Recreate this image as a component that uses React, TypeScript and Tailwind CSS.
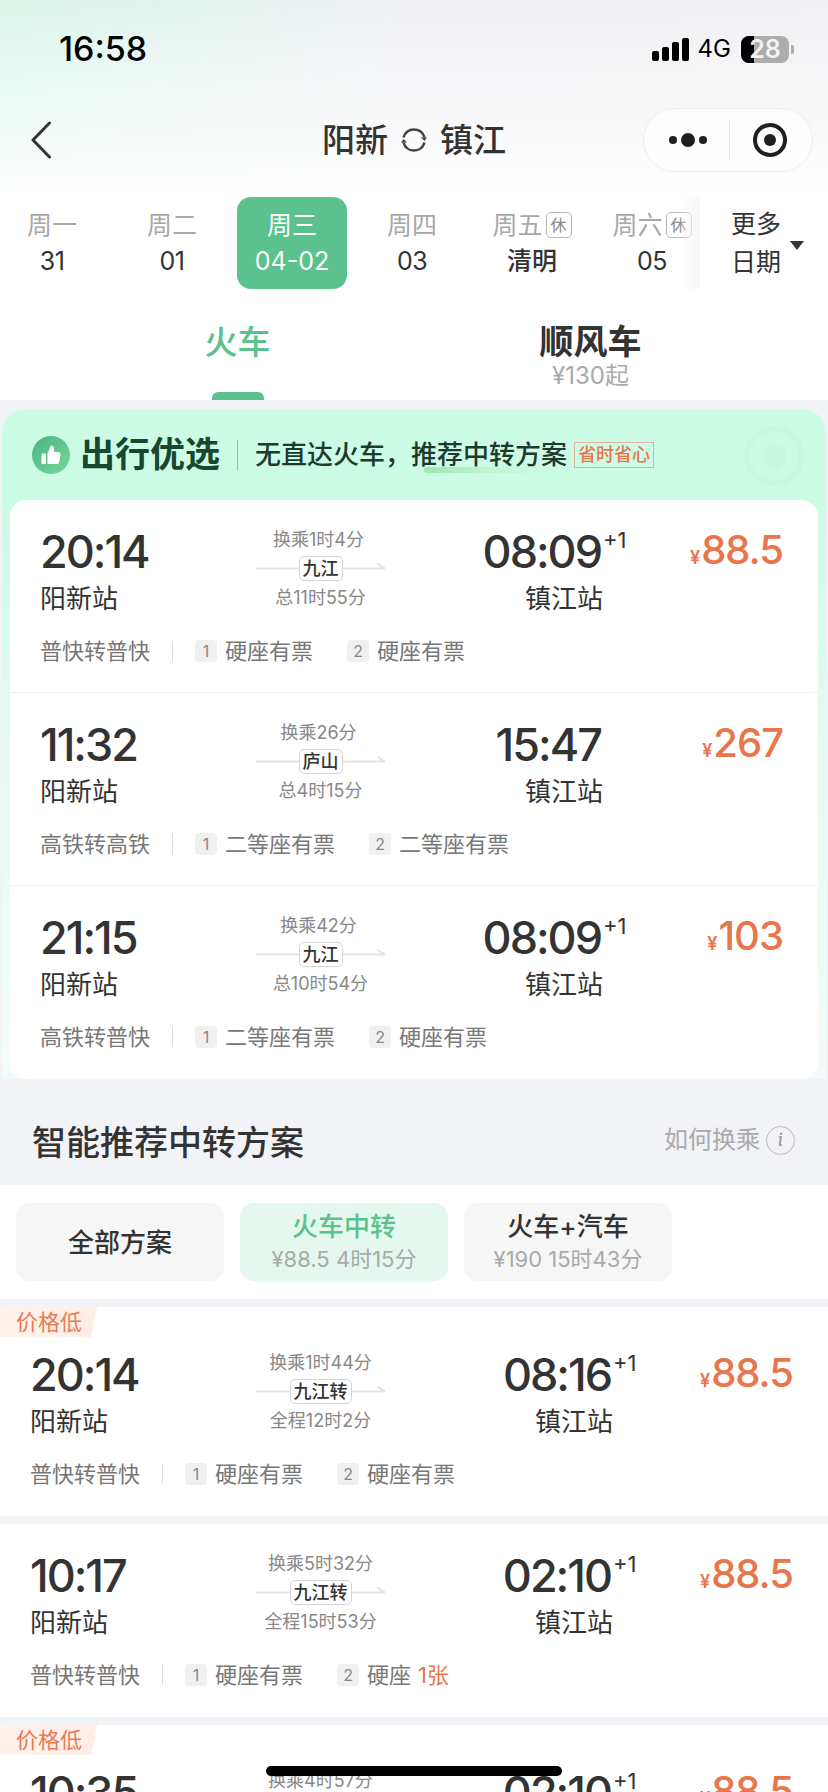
type Seat = { text: string; extra?: string };

interface TripProps {
  dep: string;
  arr: string;
  nextDay?: boolean;
  transfer: string;
  via: string;
  total: string;
  price: string;
  kind: string;
  seats: Seat[];
  inCard?: boolean;
  cheap?: boolean;
}

const days = [
  { label: "周一", value: "31" },
  { label: "周二", value: "01" },
  { label: "周三", value: "04-02", active: true },
  { label: "周四", value: "03" },
  { label: "周五", value: "清明", rest: true, bold: true },
  { label: "周六", value: "05", rest: true },
];

const picks: TripProps[] = [
  {
    dep: "20:14",
    arr: "08:09",
    nextDay: true,
    transfer: "换乘1时4分",
    via: "九江",
    total: "总11时55分",
    price: "88.5",
    kind: "普快转普快",
    seats: [{ text: "硬座有票" }, { text: "硬座有票" }],
  },
  {
    dep: "11:32",
    arr: "15:47",
    transfer: "换乘26分",
    via: "庐山",
    total: "总4时15分",
    price: "267",
    kind: "高铁转高铁",
    seats: [{ text: "二等座有票" }, { text: "二等座有票" }],
  },
  {
    dep: "21:15",
    arr: "08:09",
    nextDay: true,
    transfer: "换乘42分",
    via: "九江",
    total: "总10时54分",
    price: "103",
    kind: "高铁转普快",
    seats: [{ text: "二等座有票" }, { text: "硬座有票" }],
  },
];

const plans: TripProps[] = [
  {
    dep: "20:14",
    arr: "08:16",
    nextDay: true,
    transfer: "换乘1时44分",
    via: "九江转",
    total: "全程12时2分",
    price: "88.5",
    kind: "普快转普快",
    seats: [{ text: "硬座有票" }, { text: "硬座有票" }],
    cheap: true,
  },
  {
    dep: "10:17",
    arr: "02:10",
    nextDay: true,
    transfer: "换乘5时32分",
    via: "九江转",
    total: "全程15时53分",
    price: "88.5",
    kind: "普快转普快",
    seats: [{ text: "硬座有票" }, { text: "硬座", extra: "1张" }],
  },
  {
    dep: "10:35",
    arr: "02:10",
    nextDay: true,
    transfer: "换乘4时57分",
    via: "九江转",
    total: "全程15时53分",
    price: "88.5",
    kind: "普快转普快",
    seats: [{ text: "硬座有票" }, { text: "硬座有票" }],
    cheap: true,
  },
];

function StatusBar() {
  return (
    <div className="flex h-[98px] items-center justify-between pl-[59px] pr-[34px]">
      <span className="text-[34px] font-medium leading-none text-black">16:58</span>
      <div className="flex items-center">
        <div className="flex items-end gap-[3px]">
          <span className="h-[10px] w-[7px] rounded-[2px] bg-black" />
          <span className="h-[14px] w-[7px] rounded-[2px] bg-black" />
          <span className="h-[19px] w-[7px] rounded-[2px] bg-black" />
          <span className="h-[23px] w-[7px] rounded-[2px] bg-black" />
        </div>
        <span className="ml-[9px] text-[24px] leading-none text-black">4G</span>
        <div className="relative ml-[10px] flex h-[27px] w-[48px] items-center justify-center overflow-hidden rounded-[8px] bg-[#adadad]">
          <span className="absolute inset-y-0 left-0 w-[13px] bg-black" />
          <span className="relative text-[25px] font-semibold leading-none text-[#f2f2f2]">28</span>
        </div>
        <span className="ml-[2px] h-[9px] w-[3px] rounded-r-[2px] bg-[#adadad]" />
      </div>
    </div>
  );
}

function NavBar() {
  return (
    <div className="mt-[10px] grid h-[64px] grid-cols-[1fr_auto_1fr] items-center">
      <svg className="ml-[30px] h-[38px] w-[22px]" viewBox="0 0 22 38" fill="none" stroke="#333" strokeWidth="3" strokeLinecap="round" strokeLinejoin="round">
        <path d="M19.5 2 3 19l16.5 17" />
      </svg>
      <div className="flex items-center text-[33px] font-medium leading-none text-[#333]">
        阳新
        <svg className="mx-[12px] h-[28px] w-[28px]" viewBox="0 0 28 28" fill="none" stroke="#444" strokeWidth="2.6">
          <path d="M3.5 11.5C5 6.5 9 3.5 14 3.5c5 0 9 3 10.5 8" />
          <path d="M24.5 16.5C23 21.5 19 24.5 14 24.5c-5 0-9-3-10.5-8" />
          <path d="M21 11.5h6L24.5 15z" fill="#444" stroke="none" />
          <path d="M1 16.5h6L3.5 13z" fill="#444" stroke="none" />
        </svg>
        镇江
      </div>
      <div className="mr-[15px] flex h-[64px] w-[170px] items-center justify-self-end rounded-full border border-[#eeeeee] bg-white/70">
        <div className="flex w-[85px] items-center justify-center gap-[4px] pl-[2px]">
          <span className="h-[8px] w-[8px] rounded-full bg-[#1f1f1f]" />
          <span className="h-[14px] w-[14px] rounded-full bg-[#1f1f1f]" />
          <span className="h-[8px] w-[8px] rounded-full bg-[#1f1f1f]" />
        </div>
        <span className="h-[40px] w-px bg-[#e2e2e2]" />
        <div className="flex flex-1 items-center justify-center pr-[2px]">
          <span className="flex h-[34px] w-[34px] items-center justify-center rounded-full border-[4px] border-[#1f1f1f]">
            <span className="h-[12px] w-[12px] rounded-full bg-[#1f1f1f]" />
          </span>
        </div>
      </div>
    </div>
  );
}

function DateStrip() {
  return (
    <div className="relative mt-[25px] -ml-[8px] flex h-[92px] w-[836px]">
      {days.map((d) => (
        <div
          key={d.label}
          className={
            d.active
              ? "mx-[5px] flex w-[110px] flex-col items-center rounded-[14px] bg-[#5bc28d] text-white"
              : "flex w-[120px] flex-col items-center"
          }
        >
          <div
            className={
              d.active
                ? "mt-[11px] flex h-[34px] items-center text-[25px] leading-none"
                : "mt-[11px] flex h-[34px] items-center text-[25px] leading-none text-[#a8a8a8]"
            }
          >
            {d.label}
            {d.rest && (
              <span className="ml-[3px] flex h-[26px] w-[26px] items-center justify-center rounded-[5px] border border-[#b5b5b5] text-[16px] text-[#888]">
                休
              </span>
            )}
          </div>
          <span
            className={
              d.active
                ? "mt-[1px] text-[25px] leading-[36px]"
                : d.bold
                  ? "mt-[1px] text-[25px] font-medium leading-[36px] text-[#333]"
                  : "mt-[1px] text-[25px] leading-[36px] tracking-[-0.5px] text-[#333]"
            }
          >
            {d.value}
          </span>
        </div>
      ))}
      <div className="relative flex w-[116px] flex-col items-center pr-[28px] pt-[8px] text-[25px] leading-[38px] text-[#333]">
        <span className="absolute -left-[34px] top-0 h-full w-[22px] bg-gradient-to-r from-transparent to-[#f8f8f8]" />
        <span>更多</span>
        <span>日期</span>
        <span className="absolute right-[24px] top-[44px] h-0 w-0 border-x-[7px] border-t-[9px] border-x-transparent border-t-[#333]" />
      </div>
    </div>
  );
}

function Tabs() {
  return (
    <div className="grid h-[111px] grid-cols-2 px-[61px]">
      <div className="flex flex-col items-center pt-[33px]">
        <span className="text-[33px] font-medium leading-[40px] text-[#5bc28d]">火车</span>
        <span className="mt-auto h-[8px] w-[52px] rounded-t-[6px] bg-[#5bc28d]" />
      </div>
      <div className="flex flex-col items-center pt-[33px]">
        <span className="text-[34px] font-bold leading-[40px] text-[#333]">顺风车</span>
        <span className="text-[24px] leading-[28px] text-[#aaaaaa]">¥130起</span>
      </div>
    </div>
  );
}

function Trip(p: TripProps) {
  const c = p.inCard;
  return (
    <div className={c ? "relative h-[193px] border-b border-[#eeeeee] pl-[30px] pr-[35px] pt-[29px] last:border-b-0" : "relative bg-white pl-[30px] pr-[35px] pt-[29px] pb-[27px]"}>
      {p.cheap && (
        <span className="absolute left-0 top-0 flex h-[30px] w-[97px] items-center bg-gradient-to-r from-[#fff1eb] to-[#fdeee8] pl-[16px] text-[22px] leading-none text-[#ea7b52] [clip-path:polygon(0_0,100%_0,94%_100%,0_100%)]">
          价格低
        </span>
      )}
      <div className={p.cheap ? "mt-[16px] flex items-start" : "flex items-start"}>
        <div className={c ? "w-[216px] shrink-0" : "w-[226px] shrink-0"}>
          <div className="text-[45px] font-medium leading-[46px] tracking-[-2px] text-[#333]">{p.dep}</div>
          <div className="mt-[6px] text-[26px] leading-[36px] text-[#333]">阳新站</div>
        </div>
        <div className="-mt-[1px] flex w-[129px] shrink-0 flex-col items-center">
          <span className={c ? "mr-[4px] text-[18px] leading-[24px] text-[#888]" : "text-[18px] leading-[24px] text-[#888]"}>{p.transfer}</span>
          <div className="relative mt-[4px] flex h-[25px] w-full justify-center">
            <svg className="absolute left-0 top-[6px] h-[8px] w-[129px]" viewBox="0 0 129 8" fill="none">
              <path d="M0 6.5h129l-8-5" stroke="#e3e3e3" strokeWidth="2" />
            </svg>
            <span className="relative flex h-[25px] items-center rounded-[5px] border border-[#d5d5d5] bg-white px-[3px] text-[18px] font-medium leading-none text-[#333]">
              {p.via}
            </span>
          </div>
          <span className="mt-[5px] text-[18px] leading-[24px] text-[#888]">{p.total}</span>
        </div>
        <div className={c ? "w-[216px] shrink-0 text-right" : "w-[226px] shrink-0 text-right"}>
          <div className="relative inline-block text-[45px] font-medium leading-[46px] tracking-[-2px] text-[#333]">
            {p.arr}
            {p.nextDay && (
              <span className="absolute left-full top-[-1px] ml-[2px] text-[22px] font-normal leading-[24px] tracking-normal">+1</span>
            )}
          </div>
          <div className="-mr-[2px] mt-[6px] text-[26px] leading-[36px] text-[#333]">镇江站</div>
        </div>
        <div className="flex flex-1 items-baseline justify-end text-[#e8754b]">
          <span className="mr-[1px] text-[18px] font-semibold leading-none">¥</span>
          <span className="text-[40px] font-medium leading-[42px] tracking-[-1px]">{p.price}</span>
        </div>
      </div>
      <div className="mt-[19px] flex h-[30px] items-center text-[22px] leading-none text-[#777]">
        <span>{p.kind}</span>
        <span className="mx-[22px] h-[20px] w-px bg-[#dddddd]" />
        {p.seats.map((s, i) => (
          <div key={i} className="mr-[34px] flex items-center">
            <span className="mr-[8px] flex h-[22px] w-[22px] items-center justify-center rounded-[4px] bg-[#f0f0f0] text-[16px] text-[#888]">
              {i + 1}
            </span>
            {s.text}
            {s.extra && <span className="ml-[7px] text-[#e8754b]">{s.extra}</span>}
          </div>
        ))}
      </div>
    </div>
  );
}

function BestPicks() {
  return (
    <div className="mx-[2px] mb-[19px] mt-[9px] rounded-t-[24px] bg-gradient-to-b from-[#ccfbe6] from-15% via-[#e6faf1] via-50% to-[#f3fcf8] px-[8px]">
      <div className="relative flex h-[91px] items-center pl-[22px]">
        <span className="flex h-[38px] w-[38px] items-center justify-center rounded-full bg-gradient-to-br from-[#49b67d] to-[#77d59f]">
          <svg className="h-[24px] w-[24px]" viewBox="0 0 24 24" fill="#fff">
            <rect x="2.5" y="10.5" width="4.5" height="10.5" rx="1.2" />
            <path d="M8.5 10.5 12 2.6c1.9 0 3.1 1.3 3.1 3.2v3.3h4.2c1.5 0 2.5 1.3 2.2 2.8l-1.3 7c-.2 1.2-1.2 2.1-2.4 2.1H8.5z" />
          </svg>
        </span>
        <span className="ml-[10px] text-[35px] font-bold leading-none text-[#17472f]">出行优选</span>
        <span className="mx-[17px] h-[30px] w-px bg-[#9fb8ab]" />
        <div className="relative text-[26px] font-medium leading-none text-[#1e3a2d]">
          <span className="absolute bottom-[-5px] left-[169px] h-[6px] w-[137px] rounded-full bg-gradient-to-r from-[#9be8b2] via-[#c3f5d5] to-transparent" />
          <span className="relative">无直达火车，推荐中转方案</span>
        </div>
        <span className="ml-[7px] flex h-[26px] w-[80px] items-center justify-center border border-[#deb39b] text-[18px] font-medium leading-none text-[#e8754b]">
          省时省心
        </span>
        <span className="absolute right-[14px] top-[17px] flex h-[60px] w-[60px] items-center justify-center rounded-full border-[6px] border-[#c8f9e0]">
          <span className="h-[24px] w-[24px] rounded-full bg-[#c8f9e0]" />
        </span>
      </div>
      <div className="relative -mb-[19px] overflow-hidden rounded-[16px] bg-white">
        {picks.map((t) => (
          <Trip key={t.dep} {...t} inCard />
        ))}
      </div>
    </div>
  );
}

function PlanFilter() {
  return (
    <div className="flex gap-[16px] bg-white py-[18px] pl-[16px]">
      <div className="flex h-[78px] w-[208px] items-center justify-center rounded-[14px] bg-[#f6f6f6] text-[26px] font-medium text-[#333]">
        全部方案
      </div>
      <div className="flex h-[78px] w-[208px] flex-col items-center justify-center rounded-[14px] bg-[#e5f8ef]">
        <span className="text-[26px] font-medium leading-[34px] text-[#5bc28d]">火车中转</span>
        <span className="text-[22px] leading-[30px] text-[#aaaaaa]">¥88.5 4时15分</span>
      </div>
      <div className="flex h-[78px] w-[208px] flex-col items-center justify-center rounded-[14px] bg-[#f6f6f6]">
        <span className="text-[26px] font-medium leading-[34px] text-[#333]">火车+汽车</span>
        <span className="text-[22px] leading-[30px] text-[#aaaaaa]">¥190 15时43分</span>
      </div>
    </div>
  );
}

export default function App() {
  return (
    <div className="relative h-[1792px] w-[828px] overflow-hidden bg-[#f2f3f7] [font-family:Inter,'Noto_Sans_CJK_SC',sans-serif]">
      <div className="h-[400px] bg-white bg-[linear-gradient(180deg,rgba(255,255,255,0)_0%,#ffffff_50%),linear-gradient(100deg,#d9f6ea_0%,#eff0f3_45%,#f1f0f4_100%)]">
        <StatusBar />
        <NavBar />
        <DateStrip />
        <Tabs />
      </div>
      <BestPicks />
      <div className="flex h-[106px] items-center justify-between pl-[32px] pr-[33px]">
        <span className="mt-[22px] text-[34px] font-medium leading-none text-[#333]">智能推荐中转方案</span>
        <div className="mt-[16px] flex items-center text-[24px] leading-none text-[#aaaaaa]">
          如何换乘
          <span className="ml-[6px] flex h-[29px] w-[29px] items-center justify-center rounded-full border border-[#bbbbbb] font-serif text-[20px] italic text-[#999]">
            i
          </span>
        </div>
      </div>
      <PlanFilter />
      <div className="flex flex-col gap-[8px] pt-[8px]">
        {plans.map((t) => (
          <Trip key={t.dep} {...t} />
        ))}
      </div>
      <div className="absolute bottom-[16px] left-[266px] h-[10px] w-[296px] rounded-full bg-black" />
    </div>
  );
}
